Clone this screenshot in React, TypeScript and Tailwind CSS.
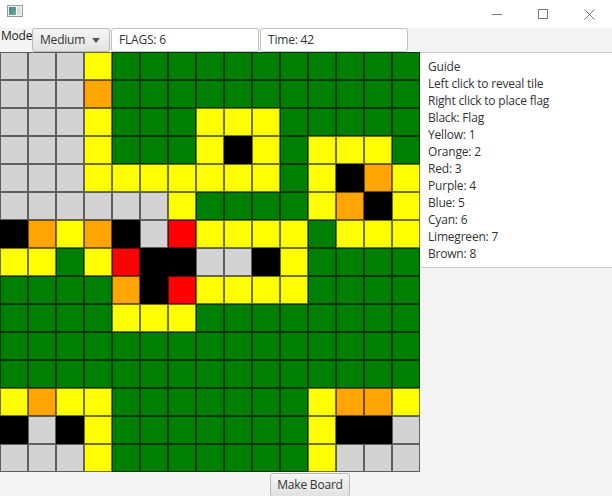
import React from "react";

const BOARD = [
  "GGGYNNNNNNNNNNN",
  "GGGONNNNNNNNNNN",
  "GGGYNNNYYYNNNNN",
  "GGGYNNNYKYNYYYN",
  "GGGYYYYYYYNYKOY",
  "GGGGGGYNNNNYOKY",
  "KOYOKGRYYYYNYYY",
  "YYNYRKKGGKYNNNN",
  "NNNNOKRYYYYNNNN",
  "NNNNYYYNNNNNNNN",
  "NNNNNNNNNNNNNNN",
  "NNNNNNNNNNNNNNN",
  "YOYYNNNNNNNYOOY",
  "KGKYNNNNNNNYKKG",
  "GGGYNNNNNNNYGGG",
];

const CELL: Record<string, string> = {
  G: "bg-[#d3d3d3]",
  Y: "bg-[#ffff00]",
  O: "bg-[#ffa500]",
  R: "bg-[#ff0000]",
  K: "bg-[#000000]",
  N: "bg-[#008000]",
};

const GUIDE = [
  "Guide",
  "Left click to reveal tile",
  "Right click to place flag",
  "Black: Flag",
  "Yellow: 1",
  "Orange: 2",
  "Red: 3",
  "Purple: 4",
  "Blue: 5",
  "Cyan: 6",
  "Limegreen: 7",
  "Brown: 8",
];

function TitleBar() {
  return (
    <div className="h-[28px] bg-white flex items-start shrink-0">
      <svg width="16" height="12" viewBox="0 0 16 12" className="ml-[7px] mt-[5px]">
        <defs>
          <linearGradient id="ic" x1="0" y1="0" x2="1" y2="1">
            <stop offset="0" stopColor="#3f7fa8" />
            <stop offset="1" stopColor="#6fb07a" />
          </linearGradient>
        </defs>
        <rect x="0.5" y="0.5" width="15" height="11" fill="#f4f4f4" stroke="#9a9a9a" />
        <rect x="2" y="2" width="7" height="8" fill="url(#ic)" />
        <rect x="10" y="2" width="4" height="8" fill="#dcdcdc" />
      </svg>
      <div className="ml-auto flex h-[28px]">
        <div className="w-[46px] flex items-center justify-center">
          <div className="w-[10px] h-[1px] bg-[#777]" />
        </div>
        <div className="w-[46px] flex items-center justify-center">
          <div className="w-[10px] h-[10px] border border-[#777]" />
        </div>
        <div className="w-[46px] flex items-center justify-center">
          <svg width="11" height="11" viewBox="0 0 11 11">
            <path d="M0.5 0.5 L10.5 10.5 M10.5 0.5 L0.5 10.5" stroke="#777" strokeWidth="1" />
          </svg>
        </div>
      </div>
    </div>
  );
}

function Toolbar() {
  return (
    <div className="h-[24px] flex shrink-0">
      <span className="w-[32px] pl-[1px] leading-[16px] text-[12px] text-[#222]">Mode</span>
      <div className="w-[78px] h-[24px] flex items-center rounded-[3px] border border-[#b9b9b9] bg-gradient-to-b from-[#f4f4f4] to-[#e2e2e2] pl-[7px] pr-[9px] text-[12px] text-[#333]">
        <span>Medium</span>
        <svg width="8" height="5" viewBox="0 0 8 5" className="ml-auto">
          <path d="M0 0 H8 L4 5 Z" fill="#555" />
        </svg>
      </div>
      <div className="ml-[1px] w-[148px] h-[24px] flex items-center rounded-[3px] border border-[#c2c2c2] bg-white pl-[7px] text-[12px] text-[#333]">
        FLAGS: 6
      </div>
      <div className="ml-[1px] w-[148px] h-[24px] flex items-center rounded-[3px] border border-[#c2c2c2] bg-white pl-[7px] text-[12px] text-[#333]">
        Time: 42
      </div>
    </div>
  );
}

function Board() {
  return (
    <div className="grid grid-cols-[repeat(15,28px)] w-[421px] shrink-0">
      {BOARD.flatMap((row, r) =>
        row.split("").map((c, i) => (
          <div
            key={r + "-" + i}
            className={"w-[28px] h-[28px] border border-black/55 " + CELL[c]}
          />
        ))
      )}
    </div>
  );
}

export default function App() {
  return (
    <div
      className="w-[612px] h-[496px] overflow-hidden bg-[#f4f4f4] flex flex-col tracking-[-0.2px]"
      style={{ fontFamily: '"Open Sans", "Noto Sans", sans-serif' }}
    >
      <TitleBar />
      <Toolbar />
      <div className="flex">
        <Board />
        <div className="flex-1 self-start h-[216px] bg-white border-y border-[#c8c8c8] pt-[5px] pl-[7px]">
          {GUIDE.map((line) => (
            <div key={line} className="text-[12px] leading-[17px] text-[#333]">
              {line}
            </div>
          ))}
        </div>
      </div>
      <div className="flex mt-[1px]">
        <button className="ml-[270px] w-[80px] h-[24px] rounded-[3px] border border-[#b9b9b9] bg-gradient-to-b from-[#f4f4f4] to-[#e2e2e2] text-[12px] text-[#333]">
          Make Board
        </button>
      </div>
    </div>
  );
}
